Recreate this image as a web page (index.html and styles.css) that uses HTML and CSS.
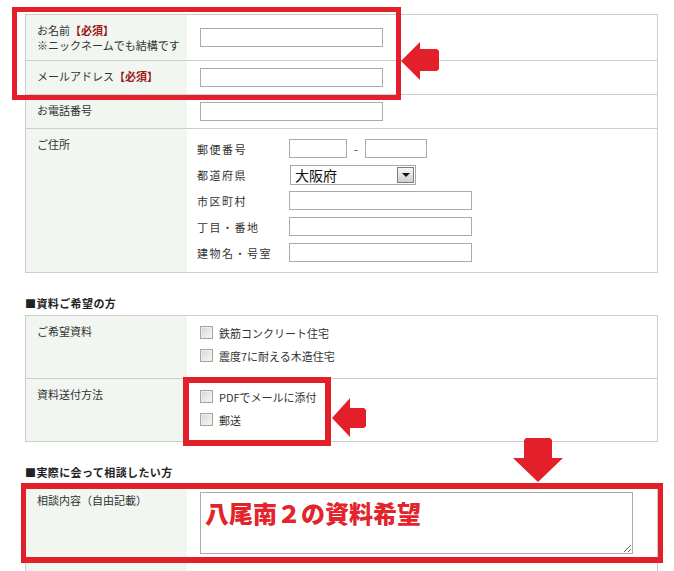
FILE: index.html
```html
<!DOCTYPE html>
<html lang="ja">
<head>
<meta charset="utf-8">
<title>お問い合わせフォーム</title>
<link rel="stylesheet" href="styles.css">
</head>
<body>
<div class="page">
  <div class="tbl">
    <div class="row row-name">
      <div class="th">お名前<b class="req">【必須】</b><br>※ニックネームでも結構です</div>
      <div class="td"><input class="txt w183" type="text"></div>
    </div>
    <div class="row row-34">
      <div class="th">メールアドレス<b class="req">【必須】</b></div>
      <div class="td"><input class="txt w183" type="text"></div>
    </div>
    <div class="row row-34">
      <div class="th">お電話番号</div>
      <div class="td"><input class="txt w183" type="text"></div>
    </div>
    <div class="row row-addr">
      <div class="th">ご住所</div>
      <div class="td td-addr">
        <div class="addr">
          <span class="al">郵便番号</span>
          <span class="postal"><input class="txt w58" type="text"><span class="dash">-</span><input class="txt w62" type="text"></span>
          <span class="al">都道府県</span>
          <span class="sel"><span class="sel-text">大阪府</span><span class="sel-btn"><span class="tri"></span></span></span>
          <span class="al">市区町村</span>
          <input class="txt w183" type="text">
          <span class="al">丁目・番地</span>
          <input class="txt w183" type="text">
          <span class="al">建物名・号室</span>
          <input class="txt w183" type="text">
        </div>
      </div>
    </div>
  </div>

  <h2 class="sec">■資料ご希望の方</h2>
  <div class="tbl">
    <div class="row row-63">
      <div class="th">ご希望資料</div>
      <div class="td td-top">
        <div class="chk-list">
          <div class="chk"><span class="cb"></span>鉄筋コンクリート住宅</div>
          <div class="chk"><span class="cb"></span>震度7に耐える木造住宅</div>
        </div>
      </div>
    </div>
    <div class="row row-63">
      <div class="th">資料送付方法</div>
      <div class="td td-top">
        <div class="chk-list chk-list2">
          <div class="chk"><span class="cb"></span>PDFでメールに添付</div>
          <div class="chk"><span class="cb"></span>郵送</div>
        </div>
      </div>
    </div>
  </div>

  <h2 class="sec">■実際に会って相談したい方</h2>
  <div class="tbl">
    <div class="row row-msg">
      <div class="th">相談内容（自由記載）</div>
      <div class="td"><textarea class="area">八尾南２の資料希望</textarea></div>
    </div>
    <div class="row row-next">
      <div class="th"></div>
      <div class="td"></div>
    </div>
  </div>

  <div class="box box1"></div>
  <div class="box box2"></div>
  <div class="box box3"></div>
  <svg class="arrows" width="674" height="571" viewBox="0 0 674 571">
    <polygon points="401,61 420,42 420,49 437,49 439,51 439,69 437,71 420,71 420,80"/>
    <polygon points="332,418 350,398 350,408 364,408 366,410 366,426 364,428 350,428 350,437"/>
    <polygon points="526,438 550,438 552,440 552,458 563,458 538,482 513,458 524,458 524,440"/>
  </svg>
</div>
</body>
</html>
```

FILE: styles.css
```css
* { box-sizing: border-box; }

body {
  margin: 0;
  background: #fff;
  font-family: "Noto Sans CJK JP", "Noto Sans", sans-serif;
  font-size: 11px;
  color: #333;
}

.page {
  position: relative;
  width: 674px;
  height: 571px;
  overflow: hidden;
  padding: 14px 0 0 25px;
}

.tbl {
  width: 633px;
  border: 1px solid #cdcdcd;
  border-bottom: none;
}

.row {
  display: grid;
  grid-template-columns: 161px 1fr;
  border-bottom: 1px solid #cdcdcd;
}

.row-name { height: 46px; }
.row-34 { height: 34px; }
.row-addr { height: 144px; }
.row-63 { height: 63px; }
.row-msg { height: 76px; }
.row-next { height: 30px; }

.th {
  background: #f1f6f0;
  padding: 8px 0 0 11px;
  line-height: 15px;
  color: #333;
}

.req {
  color: #9a1a1a;
  font-weight: bold;
}

.td {
  padding-left: 13px;
  display: flex;
  align-items: center;
}

.td-top { align-items: flex-start; }

.txt {
  display: block;
  height: 19px;
  margin: 0;
  padding: 0;
  border: 1px solid #ababab;
  background: #fff;
  outline: none;
}

.w183 { width: 183px; }
.w58 { width: 58px; }
.w62 { width: 62px; }

.td-addr {
  align-items: flex-start;
  padding: 10px 0 0 10px;
}

.addr {
  display: grid;
  grid-template-columns: 92px auto;
  grid-auto-rows: 19px;
  row-gap: 7px;
  align-items: center;
  justify-items: start;
}

.al {
  letter-spacing: 1.5px;
  color: #333;
}

.postal {
  display: flex;
  align-items: center;
}

.dash {
  width: 18px;
  text-align: center;
  color: #333;
}

.sel {
  display: flex;
  align-items: center;
  justify-content: space-between;
  width: 126px;
  height: 20px;
  margin-left: 1px;
  border: 1px solid #a8a8a8;
  padding: 0 1px 0 4px;
  background: #fff;
}

.sel-text {
  font-size: 14px;
  color: #111;
  line-height: 18px;
}

.sel-btn {
  display: flex;
  align-items: center;
  justify-content: center;
  width: 17px;
  height: 16px;
  border: 1px solid #7c7c7c;
  background: linear-gradient(#f6f6f6, #cfcfcf);
}

.tri {
  width: 0;
  height: 0;
  border-left: 4px solid transparent;
  border-right: 4px solid transparent;
  border-top: 4px solid #111;
}

.chk-list { padding-top: 5px; }
.chk-list2 { padding-top: 6px; }

.chk {
  height: 23px;
  display: flex;
  align-items: center;
  gap: 6px;
  color: #333;
}

.cb {
  width: 13px;
  height: 13px;
  border: 1px solid #a4a4a4;
  background: linear-gradient(135deg, #d6d6d6, #f8f8f8);
  box-shadow: inset 0 0 0 1px #eeeeee;
}

.sec {
  margin: 22px 0 4px;
  font-size: 11px;
  line-height: 16px;
  font-weight: bold;
  letter-spacing: 0.4px;
  color: #222;
}

.area {
  display: block;
  width: 433px;
  height: 62px;
  margin: 0;
  padding: 6px 4px 0;
  border: 1px solid #ababab;
  font-family: "Noto Sans CJK JP", sans-serif;
  font-size: 24px;
  line-height: 28px;
  font-weight: 900;
  color: #e3252b;
  resize: both;
  outline: none;
  overflow: hidden;
}

.box {
  position: absolute;
  border: 5px solid #e3202a;
}

.box1 { left: 12px; top: 7px; width: 389px; height: 93px; }
.box2 { left: 183px; top: 377px; width: 148px; height: 69px; border-width: 6px; }
.box3 { left: 21px; top: 483px; width: 642px; height: 80px; border-width: 6px 5px; }

.arrows {
  position: absolute;
  left: 0;
  top: 0;
  fill: #e3202a;
}
```
